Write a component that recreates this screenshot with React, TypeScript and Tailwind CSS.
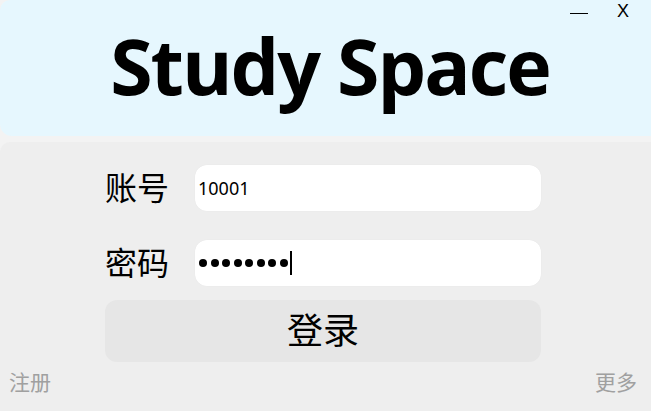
import React from 'react';

const font = { fontFamily: '"Open Sans", "Noto Sans CJK SC", sans-serif' };

const Field: React.FC<{ label: string; children: React.ReactNode }> = ({ label, children }) => (
  <div className="flex items-center">
    <span className="w-[90px] text-[32px] leading-none text-black">{label}</span>
    <div className="h-[46px] w-[346px] rounded-[12px] bg-white flex items-center pl-[3px] shadow-[0_0_1px_rgba(0,0,0,0.08)]">
      {children}
    </div>
  </div>
);

export default function App() {
  return (
    <div
      className="w-[651px] h-[411px] bg-[#f3f3f3] flex flex-col overflow-hidden"
      style={{ fontFamily: '"Noto Sans", "Noto Sans CJK SC", sans-serif' }}
    >
      <div className="relative h-[136px] bg-[#e6f7fe] rounded-tl-[10px] rounded-bl-[12px] flex justify-center">
        <h1
          className="mt-[24px] ml-[9px] text-[77px] font-bold leading-[1.1] tracking-[-2px] text-black"
          style={font}
        >
          Study Space
        </h1>
        <div className="absolute top-[2px] right-[22px] flex items-center gap-[29px] text-[18px] text-black">
          <span className="block w-[18px] h-[1px] bg-black mt-[4px]" />
          <span className="leading-none" style={{ fontFamily: '"Liberation Sans", sans-serif' }}>X</span>
        </div>
      </div>
      <div className="mt-[6px] flex-1 bg-[#eeeeee] rounded-tl-[10px] flex flex-col">
        <div className="pl-[105px] pt-[23px] flex flex-col gap-[29px]">
          <Field label="账号">
            <span className="text-[18px] text-black">10001</span>
          </Field>
          <Field label="密码">
            <div className="flex items-center gap-[3.5px] ml-[1px]">
              {Array.from({ length: 8 }).map((_, i) => (
                <span key={i} className="block w-[8px] h-[8px] rounded-full bg-black" />
              ))}
            </div>
            <span className="ml-[2px] block w-[2px] h-[24px] bg-black" />
          </Field>
        </div>
        <div className="ml-[105px] mt-[14px] h-[62px] w-[436px] rounded-[12px] bg-[#e6e6e6] flex items-center justify-center text-[36px] text-black">
          登录
        </div>
        <div className="flex justify-between pl-[9px] pr-[14px] mt-[5px] text-[21px] text-[#a0a0a0]">
          <span>注册</span>
          <span>更多</span>
        </div>
      </div>
    </div>
  );
}
